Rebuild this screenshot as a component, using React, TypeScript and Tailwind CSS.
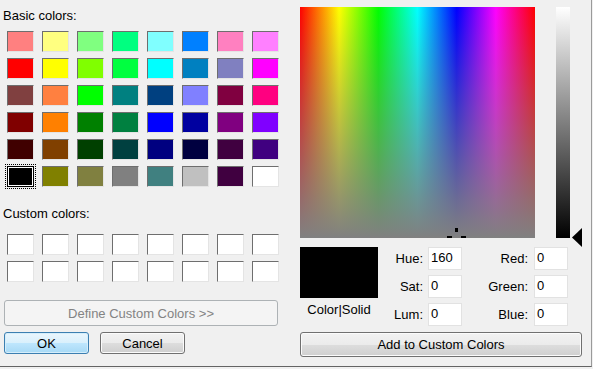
const basicColors = [
  ["bg-[#ff8080]", "bg-[#ffff80]", "bg-[#80ff80]", "bg-[#00ff80]", "bg-[#80ffff]", "bg-[#0080ff]", "bg-[#ff80c0]", "bg-[#ff80ff]"],
  ["bg-[#ff0000]", "bg-[#ffff00]", "bg-[#80ff00]", "bg-[#00ff40]", "bg-[#00ffff]", "bg-[#0080c0]", "bg-[#8080c0]", "bg-[#ff00ff]"],
  ["bg-[#804040]", "bg-[#ff8040]", "bg-[#00ff00]", "bg-[#008080]", "bg-[#004080]", "bg-[#8080ff]", "bg-[#800040]", "bg-[#ff0080]"],
  ["bg-[#800000]", "bg-[#ff8000]", "bg-[#008000]", "bg-[#008040]", "bg-[#0000ff]", "bg-[#0000a0]", "bg-[#800080]", "bg-[#8000ff]"],
  ["bg-[#400000]", "bg-[#804000]", "bg-[#004000]", "bg-[#004040]", "bg-[#000080]", "bg-[#000040]", "bg-[#400040]", "bg-[#400080]"],
  ["bg-[#000000]", "bg-[#808000]", "bg-[#808040]", "bg-[#808080]", "bg-[#408080]", "bg-[#c0c0c0]", "bg-[#400040]", "bg-[#ffffff]"],
];

const hsl = [
  { label: "Hue:", value: "160" },
  { label: "Sat:", value: "0" },
  { label: "Lum:", value: "0" },
];

const rgb = [
  { label: "Red:", value: "0" },
  { label: "Green:", value: "0" },
  { label: "Blue:", value: "0" },
];

function Swatch({ bg, selected }: { bg: string; selected?: boolean }) {
  if (selected) {
    return (
      <div className="h-[21px] w-[27px] border border-black bg-white p-px outline-1 outline-dotted outline-black outline-offset-1">
        <div className="h-full w-full bg-black" />
      </div>
    );
  }
  return (
    <div
      className={`h-[21px] w-[27px] border border-t-[#6e6e6e] border-l-[#6e6e6e] border-r-[#e4e4e4] border-b-[#e4e4e4] ${bg}`}
    />
  );
}

function Field({ value }: { value: string }) {
  return (
    <div className="h-[23px] w-[34px] border border-[#e2e2e2] bg-white pl-[2px] pt-[2px] leading-[15px]">
      {value}
    </div>
  );
}

export default function App() {
  return (
    <div className="h-[369px] w-[593px] bg-[#f0f0f0] font-['Liberation_Sans',Arial,sans-serif] text-[13px] leading-[15px] text-black">
      <div className="flex h-[367px] w-[592px] border-r border-b border-r-[#9a9a9a] border-b-[#646464]">
        {/* Left side: palettes and buttons */}
        <div className="w-[300px] pl-[3px] pt-[8px]">
          <div>Basic colors:</div>
          <div className="ml-[4px] mt-[8px] grid w-max grid-cols-8 gap-x-[8px] gap-y-[6px]">
            {basicColors.flat().map((c, i) => (
              <Swatch key={i} bg={c} selected={i === 40} />
            ))}
          </div>

          <div className="mt-[19px]">Custom colors:</div>
          <div className="ml-[4px] mt-[13px] grid w-max grid-cols-8 gap-x-[8px] gap-y-[6px]">
            {Array.from({ length: 16 }).map((_, i) => (
              <Swatch key={i} bg="bg-white" />
            ))}
          </div>

          <div className="ml-[1px] mt-[18px] flex h-[26px] w-[274px] items-center justify-center rounded-[3px] border border-[#adb2b5] bg-[#f4f4f4] text-[#838383]">
            Define Custom Colors &gt;&gt;
          </div>

          <div className="ml-[1px] mt-[6px] flex gap-[11px]">
            <div className="flex h-[22px] w-[85px] items-center justify-center rounded-[3px] border border-[#3c7fb1] bg-[linear-gradient(to_bottom,#eaf6fd_0%,#d9f0fc_50%,#bee6fd_51%,#a7d9f5_100%)] shadow-[inset_0_0_0_1px_#d5eefb]">
              OK
            </div>
            <div className="flex h-[22px] w-[85px] items-center justify-center rounded-[3px] border border-[#707070] bg-[linear-gradient(to_bottom,#f2f2f2_0%,#ebebeb_50%,#dddddd_51%,#cfcfcf_100%)] shadow-[inset_0_0_0_1px_#fbfbfb]">
              Cancel
            </div>
          </div>
        </div>

        {/* Right side: spectrum, values */}
        <div className="pt-[7px]">
          <div className="flex">
            <div className="relative h-[231px] w-[235px] bg-[linear-gradient(to_bottom,rgba(128,128,128,0),#808080),linear-gradient(to_right,#ff0000,#ffff00,#00ff00,#00ffff,#0000ff,#ff00ff,#ff0000)]">
              {/* crosshair */}
              <div className="absolute left-[155px] top-[221px] h-[4px] w-[3px] bg-black" />
              <div className="absolute left-[147px] top-[229px] h-[2px] w-[5px] bg-black" />
              <div className="absolute left-[161px] top-[229px] h-[2px] w-[5px] bg-black" />
            </div>
            <div className="relative ml-[21px] h-[231px] w-[14px] bg-[linear-gradient(to_bottom,#ffffff,#000000)]">
              <svg className="absolute left-[16px] top-[221px]" width="10" height="19" viewBox="0 0 10 19">
                <polygon points="0,9.5 10,0 10,19" fill="#000" />
              </svg>
            </div>
          </div>

          <div className="mt-[9px] flex">
            <div className="w-[78px]">
              <div className="h-[51px] bg-black" />
              <div className="mt-[4px] text-center">Color|Solid</div>
            </div>
            <div className="flex flex-col gap-[5px]">
              {hsl.map((r) => (
                <div key={r.label} className="flex items-center">
                  <span className="w-[45px] text-right">{r.label}</span>
                  <div className="ml-[5px]">
                    <Field value={r.value} />
                  </div>
                </div>
              ))}
            </div>
            <div className="flex flex-col gap-[5px]">
              {rgb.map((r) => (
                <div key={r.label} className="flex items-center">
                  <span className="w-[66px] text-right">{r.label}</span>
                  <div className="ml-[6px]">
                    <Field value={r.value} />
                  </div>
                </div>
              ))}
            </div>
          </div>

          <div className="mt-[6px] flex h-[25px] w-[282px] items-center justify-center rounded-[3px] border border-[#707070] bg-[linear-gradient(to_bottom,#f2f2f2_0%,#ebebeb_50%,#dddddd_51%,#cfcfcf_100%)] shadow-[inset_0_0_0_1px_#fbfbfb]">
            Add to Custom Colors
          </div>
        </div>
      </div>
    </div>
  );
}
